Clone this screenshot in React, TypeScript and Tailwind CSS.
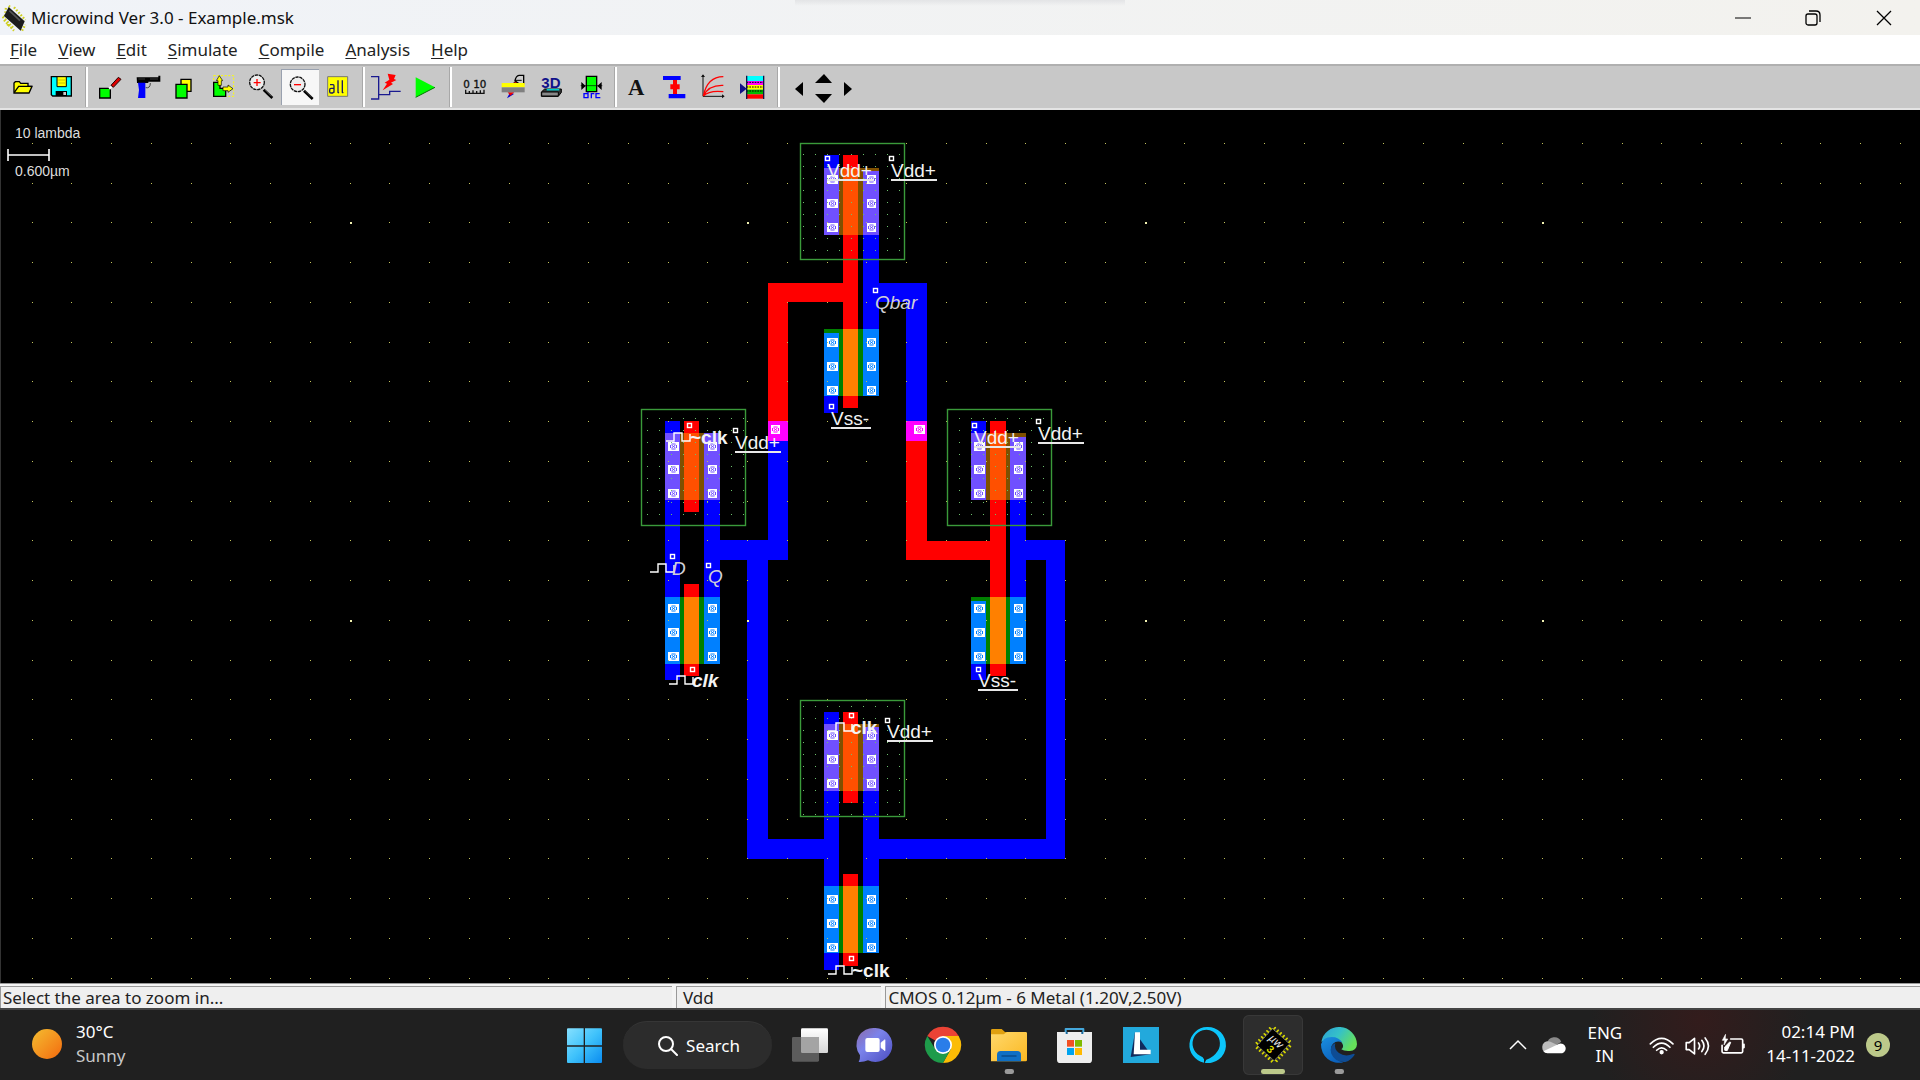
import React from "react";

type P = { children?: React.ReactNode };

/* ---------- toolbar ---------- */

function Tool({ label, box, wide, active, children }: P & { label: string; box: string; wide?: boolean; active?: boolean }) {
  return (
    <button
      aria-label={label}
      className={`h-9 shrink-0 ${wide ? "w-[39px]" : "w-[38px]"} ${active ? "border-t border-l border-gray-400 bg-[#f7f7f7]" : ""}`}
    >
      <svg viewBox={box} className={`h-9 ${wide ? "w-[39px]" : "w-[38px]"} ${active ? "-mt-px -ml-px" : ""}`}>
        {children}
      </svg>
    </button>
  );
}

function Sep() {
  return <div className="h-10 w-[3px] shrink-0 border-l border-[#a8a8a8] bg-white" />;
}

function Toolbar() {
  return (
    <div className="flex h-[46px] shrink-0 items-center border-t-2 border-b-2 border-t-[#b0b0b0] border-b-[#e4e4e4] bg-[#c8c8c8] pl-1" role="toolbar">
      <Tool label="Open" box="12 210 114 108">
        <path d="M42 282V252l4-4h12l4 5h22v9h12l-9 20z" fill="#ff0" stroke="#000" strokeWidth="4" />
        <path d="M43 280l13-18h40" fill="none" stroke="#000" strokeWidth="4" />
      </Tool>
      <Tool label="Save" box="126 210 114 108">
        <path d="M154 233h60v58h-56l-4-4z" fill="#0ff" stroke="#000" strokeWidth="4" />
        <path d="M171 233h28v30h-28z" fill="#ff0" stroke="#000" strokeWidth="3" />
        <path d="M175 243h20M175 252h20" stroke="#aa0" strokeWidth="2" />
        <path d="M167 276h34v15h-34z" fill="#000" />
        <path d="M190 279h8v9h-8z" fill="#ccc" />
      </Tool>
      <div className="w-[5px]" />
      <Sep />
      <div className="w-[3px]" />
      <Tool label="Draw box" box="273 210 114 108">
        <path d="M299 268h32v29h-32z" fill="#0f0" stroke="#000" strokeWidth="4" />
        <path d="M325 266l8-6 4 5-7 7z" fill="#fff" />
        <path d="M333 259l22-24 8 6-23 24z" fill="#e00000" stroke="#200" strokeWidth="3" />
      </Tool>
      <Tool label="Delete" box="387 210 114 108">
        <path d="M410 235h65v-5h6v18h-36v4h-34z" fill="#000" />
        <path d="M415 240h20M450 240h24" stroke="#555" strokeWidth="2" />
        <path d="M414 251h22v46h-22l3-24z" fill="#00f" />
        <path d="M437 266q14 3 14-14" stroke="#444" strokeWidth="3" fill="none" />
      </Tool>
      <Tool label="Copy" box="501 210 114 108">
        <path d="M543 241h30v36h-30z" fill="#ff0" stroke="#000" strokeWidth="4" />
        <path d="M528 256h33v41h-33z" fill="#0f0" stroke="#000" strokeWidth="4" />
      </Tool>
      <Tool label="Move" box="615 210 114 108">
        <path d="M641 230h60v62h-60z" fill="none" stroke="#ff0" strokeWidth="3" strokeDasharray="6 5" />
        <path d="M641 250h19v18h17v24h-36z" fill="#0f0" stroke="#000" strokeWidth="4" />
        <path d="M654 259v-14h-5l9-15 10 15h-4v14z" fill="#ff0" stroke="#000" strokeWidth="2" />
        <path d="M669 264h15v-6l15 11-15 11v-5h-15z" fill="#ff0" stroke="#000" strokeWidth="2" />
      </Tool>
      <Tool label="Zoom in" box="729 210 114 108">
        <path d="M791 272l26 25" stroke="#000" strokeWidth="8" />
        <path d="M794 272l20 20" stroke="#bbb" strokeWidth="1" />
        <circle cx="771" cy="250" r="22" fill="#eee" stroke="#111" strokeWidth="4" strokeDasharray="10 2" />
        <path d="M761 251h21M771 240v21" stroke="red" strokeWidth="4" />
      </Tool>
      <Tool label="Zoom out" box="843 210 114 108" active>
        <path d="M912 275l26 25" stroke="#000" strokeWidth="8" />
        <path d="M915 275l20 20" stroke="#bbb" strokeWidth="1" />
        <circle cx="893" cy="256" r="22" fill="#eee" stroke="#111" strokeWidth="4" strokeDasharray="10 2" />
        <path d="M882 257h21" stroke="red" strokeWidth="4" />
      </Tool>
      <Tool label="View all" box="957 210 114 108">
        <path d="M983 233h60v59h-60z" fill="#ff0" stroke="#777" strokeWidth="3" />
        <path d="M990 257h9q3 0 3 4v20M1002 268h-9q-4 0-4 5v5q0 4 4 4h5l4-4M1014 244v36l3 2M1027 244v36l3 2" fill="none" stroke="#1a1a60" strokeWidth="4" />
      </Tool>
      <div className="w-[5px]" />
      <Sep />
      <div className="w-px" />
      <Tool label="Simulate" box="1098 210 114 108">
        <path d="M1113 233h23v67h-23M1136 287h33v-10h33" fill="none" stroke="#1a1a90" strokeWidth="4" />
        <path d="M1163 224l24 4-5 12 7 3-16 8 6 4-31 19 13-20-7-3 14-9z" fill="red" />
      </Tool>
      <Tool label="Run" box="1212 210 114 108">
        <path d="M1247 235v60l58-30z" fill="#0f0" />
        <path d="M1247 295l58-30" stroke="#070" strokeWidth="3" />
      </Tool>
      <div className="w-[7px]" />
      <Sep />
      <div className="w-1" />
      <Tool label="Measure distance" box="48 30 117 108" wide>
        <text x="70" y="86" fontFamily="DejaVu Sans" fontSize="31" fill="#111" stroke="#111">0 10</text>
        <path d="M77 92v11h55V92M88 96v7M99 94v9M110 96v7M121 94v9" fill="none" stroke="#111" strokeWidth="4" />
      </Tool>
      <Tool label="2D cross section" box="162 30 117 108" wide>
        <path d="M198 118l7-14h15z" fill="#00c" />
        <path d="M200 100h20l-12 10z" fill="#e00" />
        <path d="M217 73l8-8 12 8z" fill="#e00" stroke="#000" strokeWidth="2" />
        <path d="M222 65q3-15 12-16h14v25h-14z" fill="#ccc" stroke="#000" strokeWidth="4" />
        <path d="M222 64h20" stroke="#000" strokeWidth="3" />
        <path d="M182 72h69v13h-69z" fill="#ff0" />
        <path d="M182 85h69v15h-69z" fill="#808080" />
      </Tool>
      <Tool label="3D process view" box="279 30 117 108" wide>
        <text x="301" y="88" fontFamily="Liberation Sans" fontWeight="bold" fontSize="45" fill="#11118a">3D</text>
        <path d="M301 99l10-9h50v10l-9 12h-51z" fill="#333" stroke="#000" strokeWidth="3" />
        <path d="M302 99h50v12h-50z" fill="#888" stroke="#000" strokeWidth="3" />
        <path d="M317 92h38" stroke="#0cc" strokeWidth="5" />
      </Tool>
      <Tool label="Design rule checker" box="402 30 117 108" wide>
        <path d="M442 52h31v46h-31z" fill="#0f0" stroke="#000" strokeWidth="4" />
        <path d="M427 69v24l13-12zM488 69v24l-13-12z" fill="#000" />
        <path d="M425 80h65" stroke="#000" strokeWidth="2" />
        <path d="M447 98v18h-12v-12h12M457 118v-14h9M482 104h-11v12h13" fill="none" stroke="#00f" strokeWidth="4" />
      </Tool>
      <div className="w-0.5" />
      <Sep />
      <Tool label="Add text" box="531 30 117 108" wide>
        <text x="564" y="109" fontFamily="Liberation Serif" fontWeight="bold" fontSize="68" fill="#111">A</text>
      </Tool>
      <Tool label="Add a via" box="648 30 117 108" wide>
        <path d="M669 51h53v12h-53zM686 105h50v13h-50z" fill="#00f" />
        <path d="M699 63h12v13h8v15h-8v14h-12V91h-8V76h8z" fill="red" />
      </Tool>
      <Tool label="MOS characteristics" box="765 30 117 108" wide>
        <path d="M789 48v64h62" fill="none" stroke="#111" strokeWidth="3" />
        <path d="M783 54l6-8 6 8zM846 106l8 6-8 6z" fill="#111" />
        <path d="M790 111q12-58 60-58M790 111q16-34 60-32M790 111q18-18 60-13" fill="none" stroke="red" strokeWidth="4" />
      </Tool>
      <Tool label="Layer palette" box="885 30 117 108" wide>
        <path d="M923 51h50v15h-50z" fill="#0ff" />
        <path d="M923 66h50v12h-50z" fill="#f0f" />
        <path d="M923 78h50v14h-50z" fill="#ff0" />
        <path d="M923 92h50v14h-50z" fill="#0b0" />
        <path d="M923 106h50v13h-50z" fill="red" />
        <path d="M923 70h50M923 84h50M923 96h50" stroke="#000" strokeWidth="3" strokeDasharray="5 3" />
        <path d="M923 50v70M974 50v70" stroke="#114" strokeWidth="4" />
        <path d="M903 73l20 16-20 16z" fill="#118" />
      </Tool>
      <div className="w-1" />
      <Sep />
      <div className="w-1.5" />
      <button aria-label="Scroll left" className="w-[25px]"><svg viewBox="0 0 25 36" className="h-9"><path d="M17 13v14l-8-7z" /></svg></button>
      <div className="flex h-9 w-[25px] flex-col">
        <button aria-label="Scroll up" className="h-[18px]"><svg viewBox="0 0 25 18" className="h-[18px]"><path d="M4 14h17l-8-9z" /></svg></button>
        <button aria-label="Scroll down" className="h-[18px]"><svg viewBox="0 0 25 18" className="h-[18px]"><path d="M4 7h17l-8 9z" /></svg></button>
      </div>
      <button aria-label="Scroll right" className="w-[25px]"><svg viewBox="0 0 25 36" className="h-9"><path d="M8 13v14l8-7z" /></svg></button>
    </div>
  );
}

/* ---------- layout drawing ---------- */

const BLUE = "#0000ff";
const RED = "#ff0000";

function Box({ x1, y1, x2, y2, c }: { x1: number; y1: number; x2: number; y2: number; c: string }) {
  return <rect x={x1} y={y1} width={x2 - x1} height={y2 - y1} fill={c} />;
}

function Contact({ x, y, w = 9, c }: { x: number; y: number; w?: number; c: string }) {
  const m = x + w / 2;
  return (
    <g>
      <rect x={x} y={y} width={w} height={9} fill="#fff" />
      <path d={`M${m - 2} ${y + 2}h4M${m - 2} ${y + 7}h4M${m - 3} ${y + 3}v3M${m + 3} ${y + 3}v3M${m - 2} ${y + 3}l4 3M${m + 2} ${y + 3}l-4 3`} stroke={c} strokeWidth={1} fill="none" />
    </g>
  );
}

function Mark({ x, y, c = "#000" }: { x: number; y: number; c?: string }) {
  return <rect x={x + 0.5} y={y + 0.5} width={4} height={4} fill={c} stroke="#fff" strokeWidth={1.4} />;
}

function Pulse({ x, y }: { x: number; y: number }) {
  return <path d={`M${x} ${y}h8v-8h8v8h8v-7`} fill="none" stroke="#fff" strokeWidth={1.4} />;
}

type Kind = "power" | "clock" | "clockItalic" | "node";
function Label({ x, y, kind, children }: P & { x: number; y: number; kind: Kind }) {
  const clock = kind === "clock" || kind === "clockItalic";
  return (
    <text
      x={x}
      y={y}
      fontSize={19}
      fontWeight={clock ? 700 : 400}
      fontStyle={kind === "node" || kind === "clockItalic" ? "italic" : "normal"}
      fill={kind === "node" ? "#d0d0d8" : "#f4f4f4"}
    >
      {children}
    </text>
  );
}

function Rule({ x, y, w = 46 }: { x: number; y: number; w?: number }) {
  return <rect x={x} y={y} width={w} height={2} fill="#e8e8e8" />;
}

function Well({ x, y, dx, dy, cols = 9, rows = 9 }: { x: number; y: number; dx: number; dy: number; cols?: number; rows?: number }) {
  return (
    <g>
      <rect x={x + 0.5} y={y + 0.5} width={104} height={116} fill="none" stroke="#3a9a3a" strokeWidth={1.4} />
      {Array.from({ length: cols * rows }, (_, i) => (
        <rect key={i} x={dx + (i % cols) * 12} y={dy + Math.floor(i / cols) * 12} width={1} height={1} fill="#6cc06c" />
      ))}
    </g>
  );
}

/* A transistor's diffusion: left metal, gate and right metal share one x origin. */
function Device({ x, y, p, gate = 15, lTop = 0, rTop = 0, rows }: { x: number; y: number; p: boolean; gate?: number; lTop?: number; rTop?: number; rows: number[] }) {
  const metal = p ? "#7050ff" : "#0080ff";
  return (
    <g>
      <Box x1={x} y1={y} x2={x + 55} y2={y + 67} c={p ? "#7f5000" : "#008000"} />
      <Box x1={x} y1={y + lTop} x2={x + 15} y2={y + 67} c={metal} />
      <Box x1={x + 39} y1={y + rTop} x2={x + 55} y2={y + 67} c={metal} />
      <Box x1={x + 19} y1={y} x2={x + 19 + gate} y2={y + 67} c={p ? "#ff5000" : "#ff8000"} />
      {rows.map((r) => (
        <g key={r}>
          <Contact x={x + 3} y={r} w={11} c={metal} />
          <Contact x={x + 43} y={r} c={metal} />
        </g>
      ))}
    </g>
  );
}

function GridDots() {
  const dots: React.ReactNode[] = [];
  for (let r = 0; r < 22; r++)
    for (let c = 0; c < 96; c++) {
      const major = c % 10 === 8 && r % 10 === 2;
      dots.push(
        <rect
          key={`${r}-${c}`}
          x={Math.round(31.6 + c * 39.75)}
          y={Math.round(142.9 + r * 39.75)}
          width={major ? 2 : 1}
          height={major ? 2 : 1}
          fill={major ? "#f0f0b0" : "#c4c45c"}
        />,
      );
    }
  return <g>{dots}</g>;
}

function Layout() {
  return (
    <svg className="block h-full w-full font-['Liberation_Sans',sans-serif]" role="img" aria-label="Latch layout">
      <g transform="translate(-1 -110)">
        {/* metal */}
        <Box x1={824} y1={155} x2={839} y2={168} c={BLUE} />
        <Box x1={863} y1={234} x2={879} y2={330} c={BLUE} />
        <Box x1={879} y1={283} x2={927} y2={302} c={BLUE} />
        <Box x1={906} y1={283} x2={927} y2={421} c={BLUE} />
        <Box x1={824} y1={396} x2={838} y2={413} c={BLUE} />
        <Box x1={665} y1={421} x2={680} y2={680} c={BLUE} />
        <Box x1={704} y1={500} x2={720} y2={597} c={BLUE} />
        <Box x1={720} y1={540} x2={788} y2={560} c={BLUE} />
        <Box x1={768} y1={441} x2={788} y2={560} c={BLUE} />
        <Box x1={747} y1={560} x2={768} y2={859} c={BLUE} />
        <Box x1={747} y1={839} x2={824} y2={859} c={BLUE} />
        <Box x1={971} y1={421} x2={986} y2={433} c={BLUE} />
        <Box x1={1010} y1={500} x2={1026} y2={597} c={BLUE} />
        <Box x1={1026} y1={540} x2={1065} y2={560} c={BLUE} />
        <Box x1={1046} y1={540} x2={1065} y2={859} c={BLUE} />
        <Box x1={879} y1={839} x2={1065} y2={859} c={BLUE} />
        <Box x1={971} y1={663} x2={986} y2={680} c={BLUE} />
        <Box x1={824} y1={712} x2={839} y2={970} c={BLUE} />
        <Box x1={863} y1={791} x2={879} y2={886} c={BLUE} />
        {/* polysilicon */}
        <Box x1={843} y1={155} x2={858} y2={408} c={RED} />
        <Box x1={768} y1={283} x2={843} y2={302} c={RED} />
        <Box x1={768} y1={283} x2={788} y2={421} c={RED} />
        <Box x1={684} y1={421} x2={699} y2={512} c={RED} />
        <Box x1={684} y1={584} x2={699} y2={676} c={RED} />
        <Box x1={990} y1={421} x2={1006} y2={676} c={RED} />
        <Box x1={906} y1={441} x2={927} y2={560} c={RED} />
        <Box x1={906} y1={541} x2={990} y2={560} c={RED} />
        <Box x1={843} y1={712} x2={858} y2={803} c={RED} />
        <Box x1={843} y1={874} x2={858} y2={966} c={RED} />
        {/* vias between poly and metal */}
        <Box x1={768} y1={421} x2={788} y2={441} c="#ff00ff" />
        <Box x1={906} y1={421} x2={927} y2={441} c="#ff00ff" />
        <Contact x={771} y={425} c="#ff00ff" />
        <Contact x={914} y={425} w={11} c="#ff00ff" />
        {/* transistors */}
        <Device x={824} y={168} p rTop={3} rows={[175, 199, 223]} />
        <Device x={824} y={329} p={false} lTop={4} rows={[338, 362, 386]} />
        <Device x={665} y={433} p rows={[442, 465, 489]} />
        <Device x={665} y={597} p={false} rows={[604, 628, 652]} />
        <Device x={971} y={433} p rTop={4} gate={16} rows={[442, 465, 489]} />
        <Device x={971} y={597} p={false} lTop={4} gate={16} rows={[604, 628, 652]} />
        <Device x={824} y={724} p rTop={3} rows={[731, 755, 779]} />
        <Device x={824} y={886} p={false} rows={[895, 919, 943]} />
        <GridDots />
        <Well x={800} y={143} dx={803} dy={154} />
        <Well x={641} y={409} dx={647} dy={418} />
        <Well x={947} y={409} dx={959} dy={418} cols={8} />
        <Well x={800} y={700} dx={803} dy={706} rows={10} />
        {/* labels */}
        <Mark x={825} y={156} c={BLUE} />
        <Label x={827} y={177} kind="power">Vdd+</Label>
        <Rule x={827} y={179} />
        <Mark x={889} y={156} />
        <Label x={891} y={177} kind="power">Vdd+</Label>
        <Rule x={891} y={179} />
        <Mark x={873} y={288} c={BLUE} />
        <Label x={875} y={309} kind="node">Qbar</Label>
        <Mark x={829} y={404} c={BLUE} />
        <Label x={831} y={425} kind="power">Vss-</Label>
        <Rule x={831} y={427} w={40} />

        <Mark x={687} y={423} c={RED} />
        <Pulse x={666} y={441} />
        <Label x={690} y={444} kind="clock">~clk</Label>
        <Mark x={733} y={428} />
        <Label x={735} y={449} kind="power">Vdd+</Label>
        <Rule x={735} y={451} />
        <Mark x={670} y={554} c={BLUE} />
        <Pulse x={650} y={572} />
        <Label x={672} y={575} kind="node">D</Label>
        <Mark x={706} y={563} c={BLUE} />
        <Label x={708} y={583} kind="node">Q</Label>
        <Mark x={690} y={667} c={RED} />
        <Pulse x={669} y={684} />
        <Label x={692} y={687} kind="clockItalic">clk</Label>

        <Mark x={972} y={423} c={BLUE} />
        <Label x={974} y={444} kind="power">Vdd+</Label>
        <Rule x={974} y={446} />
        <Mark x={1036} y={419} />
        <Label x={1038} y={440} kind="power">Vdd+</Label>
        <Rule x={1038} y={442} />
        <Mark x={976} y={667} c={BLUE} />
        <Label x={978} y={687} kind="power">Vss-</Label>
        <Rule x={978} y={689} w={40} />

        <Mark x={849} y={713} c={RED} />
        <Pulse x={828} y={731} />
        <Label x={851} y={734} kind="clock">clk</Label>
        <Mark x={885} y={718} />
        <Label x={887} y={738} kind="power">Vdd+</Label>
        <Rule x={887} y={740} />
        <Mark x={849} y={956} c={RED} />
        <Pulse x={828} y={974} />
        <Label x={852} y={977} kind="clock">~clk</Label>

        {/* scale bar */}
        <text x={15} y={138} fontSize={14} fill="#ddd">10 lambda</text>
        <path d="M8 155h41M8 149v12M49 149v12" stroke="#fff" strokeWidth={1.6} fill="none" />
        <text x={15} y={176} fontSize={14} fill="#ddd">0.600µm</text>
      </g>
    </svg>
  );
}

/* ---------- taskbar ---------- */

function App60({ label, box, active, children }: P & { label: string; box: string; active?: boolean }) {
  return (
    <button aria-label={label} className={`h-[60px] w-[60px] shrink-0 rounded-md ${active ? "bg-[#2d2d2d] ring-1 ring-[#383838] ring-inset" : ""}`}>
      <svg viewBox={box} className="h-[60px] w-[60px]">{children}</svg>
    </button>
  );
}

function Chip() {
  const pins = [-30, -18, -6, 6, 18, 30];
  return (
    <g transform="translate(817 191) rotate(42)">
      {pins.map((k) => (
        <path key={k} d={`M${k} -36v-6M${k} 36v6M-36 ${k}h-6M36 ${k}h6`} strokeLinecap="round" stroke="#d8d800" strokeWidth="5" />
      ))}
      <rect x="-34" y="-34" width="68" height="68" fill="#000" stroke="#ccc" strokeWidth="2" strokeDasharray="3 3" />
      <text x="-23" y="-2" fontFamily="Liberation Sans" fontStyle="italic" fontSize="34" fill="#eee">µw</text>
      <text x="-6" y="27" fontFamily="Liberation Sans" fontWeight="bold" fontSize="32" fill="#dd0">3</text>
    </g>
  );
}

function Taskbar() {
  return (
    <footer className="grid h-[72px] shrink-0 grid-cols-[1fr_auto_1fr] items-center border-t-2 border-[#444] bg-[#202020] bg-[radial-gradient(circle_at_1700px_10px,#331c1c,#202020_110px)] text-[17px] text-white">
      <button className="flex h-[60px] items-center gap-[14px] justify-self-start pb-0.5 pl-8 text-left">
        <span className="size-[30px] rounded-full bg-linear-135 from-[#f2bc30] to-[#f2680c]" />
        <span className="leading-6">
          <span className="block">30°C</span>
          <span className="block text-[#c8c8c8]">Sunny</span>
        </span>
      </button>
      <div className="flex items-center gap-1.5 pl-0.5">
        <App60 label="Start" box="42 102 180 180">
          <defs>
            <linearGradient id="win" gradientUnits="userSpaceOnUse" x1="81" y1="142" x2="186" y2="246">
              <stop offset="0" stopColor="#86e0ff" /><stop offset="0.5" stopColor="#3fc2fb" /><stop offset="1" stopColor="#0a8cf0" />
            </linearGradient>
          </defs>
          <path d="M81 145q0-3 3-3h47v51H81zM135 142h48q3 0 3 3v48h-51zM81 197h50v49H84q-3 0-3-3zM135 197h51v46q0 3-3 3h-48z" fill="url(#win)" />
        </App60>
        <button className="mx-[3px] flex h-12 w-[149px] items-center justify-center gap-2 rounded-full border-t border-[#363636] bg-[#2c2c2c] pl-1">
          <svg viewBox="0 0 20 20" className="size-5" fill="none" stroke="#fff" strokeWidth="2" strokeLinecap="round"><circle cx="8" cy="8" r="7" /><path d="M13 13l6 6" /></svg>
          Search
        </button>
        <App60 label="Task view" box="723 102 180 180">
          <defs><linearGradient id="tv" x1="0" y1="0" x2="0" y2="1"><stop offset="0" stopColor="#fff" /><stop offset="1" stopColor="#d6d6d6" /></linearGradient></defs>
          <rect x="783" y="142" width="81" height="74" rx="4" fill="url(#tv)" />
          <rect x="756" y="168" width="81" height="74" rx="4" fill="#5c5c5c" />
          <path d="M783 168h54v48h-50q-4 0-4-4z" fill="#a4a4a4" />
        </App60>
        <App60 label="Chat" box="921 102 180 180">
          <defs><linearGradient id="chat" x1="0" y1="0" x2="1" y2="1"><stop offset="0" stopColor="#8c6aa8" /><stop offset="0.4" stopColor="#7b83eb" /><stop offset="1" stopColor="#4a4cc0" /></linearGradient></defs>
          <path d="M1006 141a51 51 0 1 1-22 97q-14 6-28 5 5-10 4-20a51 51 0 0 1 46-82z" fill="url(#chat)" />
          <rect x="976" y="171" width="43" height="42" rx="6" fill="#fff" />
          <path d="M1023 185l12-9v33l-12-9z" fill="#fff" stroke="#fff" strokeWidth="2" strokeLinejoin="round" />
        </App60>
        <App60 label="Chrome" box="1116 102 180 180">
          <path d="M1206 192L1159 165A54 54 0 0 1 1253 165z" fill="#ea4335" />
          <path d="M1206 165H1253A54 54 0 0 1 1206 246L1229 205z" fill="#fbbc05" />
          <path d="M1159 165L1183 205L1229 205L1206 246A54 54 0 0 1 1159 165z" fill="#1e9b4a" />
          <circle cx="1206" cy="192" r="27" fill="#fff" />
          <circle cx="1206" cy="192" r="22" fill="#2a7de9" />
        </App60>
        <App60 label="File Explorer" box="1314 102 180 180">
          <defs><linearGradient id="fold" x1="0" y1="0" x2="1" y2="1"><stop offset="0" stopColor="#ffd86b" /><stop offset="1" stopColor="#fbb822" /></linearGradient></defs>
          <path d="M1350 148q0-4 4-4h28l10 9h20v20h-62z" fill="#e0a010" />
          <path d="M1350 160h38l10-7h56q4 0 4 4v80q0 4-4 4h-104z" fill="url(#fold)" />
          <path d="M1368 241v-20q0-11 11-11h50q11 0 11 11v20z" fill="#0f6fc4" />
          <path d="M1383 225h42" stroke="#084c8c" strokeWidth="4" strokeLinecap="round" />
          <rect x="1391" y="264" width="28" height="15" rx="7" fill="#9a9a9a" />
        </App60>
        <App60 label="Microsoft Store" box="132 102 180 180">
          <path d="M194 160v-16h53v16" fill="none" stroke="#45a8dc" strokeWidth="6" strokeLinejoin="round" />
          <path d="M168 153h105v83q0 10-10 10h-85q-10 0-10-10z" fill="#eee" />
          <path d="M197 153v6M244 153v6" stroke="#176ba0" strokeWidth="6" />
          <path d="M198 177h21v20h-21z" fill="#f25022" /><path d="M222 177h21v20h-21z" fill="#7fba00" />
          <path d="M198 201h21v21h-21z" fill="#00a4ef" /><path d="M222 201h21v21h-21z" fill="#ffb900" />
        </App60>
        <App60 label="Lenovo Vantage" box="330 102 180 180">
          <path d="M366 138h108v108H366z" fill="#22a9dc" />
          <path d="M402 154l-13 74 60-8z" fill="#102a5c" />
          <path d="M402 154h15v52h32v14h-51z" fill="#fff" />
        </App60>
        <App60 label="Alexa" box="528 102 180 180">
          <path d="M618 138a54 54 0 0 0-9 107v-10q-2-7-12-11a41 41 0 1 1 53-14q-12 19-34 26l-5 9a54 54 0 1 0 7-107z" fill="#0cc5fa" />
        </App60>
        <App60 label="Microwind" box="726 102 180 180" active>
          <Chip />
          <rect x="780" y="264" width="72" height="15" rx="7" fill="#bcc98a" />
        </App60>
        <App60 label="Microsoft Edge" box="924 102 180 180">
          <defs>
            <linearGradient id="eg" x1="0" y1="0" x2="1" y2="0.5"><stop offset="0" stopColor="#2b9fd8" /><stop offset="0.5" stopColor="#35c1c8" /><stop offset="1" stopColor="#66e05a" /></linearGradient>
            <linearGradient id="eb" x1="0" y1="0" x2="0.5" y2="1"><stop offset="0" stopColor="#1a8fe0" /><stop offset="1" stopColor="#0c62bd" /></linearGradient>
          </defs>
          <path d="M961 182a54 54 0 0 1 107 8q-1 19-22 20-18 1-25-5 8-6 4-15-5-15-26-15-22 0-38 7z" fill="url(#eg)" />
          <path d="M960 190q6-22 32-22 22 0 32 17-16-8-28 3-10 12-3 28 12 24 34 28a54 54 0 0 1-67-54z" fill="url(#eb)" />
          <path d="M1003 186q-20 10-12 32 12 27 42 25 18-6 28-22 0-4-5-2-24 10-42-3-16-12-11-30z" fill="#0e4c94" />
          <rect x="1001" y="264" width="28" height="15" rx="7" fill="#9a9a9a" />
        </App60>
      </div>
      <div className="flex items-center justify-self-end pr-[30px]">
        <button aria-label="Show hidden icons" className="mr-[15px]"><svg viewBox="0 0 18 12" className="w-[18px]" fill="none" stroke="#fff" strokeWidth="1.5"><path d="M1 10l8-8 8 8" /></svg></button>
        <button aria-label="OneDrive" className="mr-[21px]">
          <svg viewBox="185 165 74 52" className="w-[25px]">
            <path d="M200 188a22 22 0 0 1 42-6l-20 14z" fill="#8a8a8a" />
            <path d="M186 200a17 17 0 0 1 24-18l30 14-44 18a14 14 0 0 1-10-14z" fill="#bdbdbd" />
            <path d="M236 188a14 14 0 0 1 9 28h-44q-8 0-12-6z" fill="#fff" />
          </svg>
        </button>
        <button className="mr-[27px] pb-0.5 text-center leading-[23px]">ENG<br />IN</button>
        <button aria-label="Network, volume and battery" className="mr-5 flex">
          <svg viewBox="508 153 292 72" className="w-[97px]" fill="none" stroke="#fff" strokeWidth="5" strokeLinecap="round" strokeLinejoin="round">
            <path d="M512 186q34-34 68 0M521 196q25-25 50 0M531 205q15-14 30 0" />
            <circle cx="546" cy="211" r="4" fill="#fff" />
            <path d="M620 182h9l16-13v47l-16-13h-9zM657 183q7 9 0 18M667 175q13 17 0 34M677 168q20 24 0 49" />
            <path d="M754 171h32q4 0 4 4v34q0 4-4 4h-54q-4 0-4-4v-19M794 187v10" />
            <path d="M738 158l-9 17h7l-2 14 11-18h-7z" fill="#fff" strokeWidth="2" />
            <path d="M736 204v-9l14-14h4l-10 24z" fill="#fff" strokeWidth="3" />
          </svg>
        </button>
        <button className="mr-[11px] pb-0.5 text-right leading-6">02:14 PM<br />14-11-2022</button>
        <button aria-label="9 notifications" className="size-6 rounded-full bg-[#bcc98a] text-[15px] leading-6 text-black">9</button>
      </div>
    </footer>
  );
}

/* ---------- window ---------- */

const menus = ["File", "View", "Edit", "Simulate", "Compile", "Analysis", "Help"];

export default function App() {
  return (
    <div className="flex h-screen flex-col overflow-hidden bg-[#f0f0f0] font-['Noto_Sans',sans-serif]">
      <header className="relative flex h-[35px] shrink-0 items-center bg-linear-to-r from-[#f0f3f8] to-[#f3f2ee]">
        <div className="absolute top-0 left-1/2 h-1.5 w-[330px] -translate-x-1/2 bg-linear-to-b from-[#e3e4e6] to-transparent" />
        <svg viewBox="0 0 84 96" className="h-8 w-7">
          <path d="M18 18l-4 30M26 12l8 4M8 44l34 36M12 54l30 32M66 86l10-18M42 16l34 38M24 66v8M34 74v8" stroke="#cfcf20" strokeWidth="7" strokeDasharray="5 5" />
          <path d="M26 15l48 43-12 28-50-44z" fill="#1c1c1c" />
          <path d="M28 26l32 30" stroke="#555" strokeWidth="5" />
        </svg>
        <h1 className="ml-[3px] flex-1 text-[17px] text-[#111]">Microwind Ver 3.0 - Example.msk</h1>
        <div className="flex h-full">
          <button aria-label="Minimize" className="flex w-[70px] items-center justify-center"><svg viewBox="0 0 16 16" className="size-4"><path d="M0 8h16" stroke="#000" /></svg></button>
          <button aria-label="Restore" className="flex w-[70px] items-center justify-center"><svg viewBox="0 0 16 16" className="size-4" fill="none" stroke="#000" strokeWidth="1.3"><rect x="1" y="4" width="11" height="11" rx="2" /><path d="M4 1h7q4 0 4 4v7" /></svg></button>
          <button aria-label="Close" className="flex w-[72px] items-center justify-center"><svg viewBox="0 0 16 16" className="size-4"><path d="M1 1l14 14M15 1L1 15" stroke="#000" strokeWidth="1.3" /></svg></button>
        </div>
      </header>
      <nav className="flex h-[29px] shrink-0 items-center gap-px bg-white text-[17px] text-[#222]">
        {menus.map((m) => (
          <button key={m} className="px-[10px]"><span className="underline underline-offset-2">{m[0]}</span>{m.slice(1)}</button>
        ))}
      </nav>
      <Toolbar />
      <main className="min-h-0 flex-1 border-l border-[#333] bg-black">
        <Layout />
      </main>
      <div className="flex h-[25px] shrink-0 gap-1 border-t border-[#999] bg-[#f4f4f4] pt-0.5 text-[17px] leading-[21px] text-[#222]">
        <div className="w-[35%] border-t border-l border-[#999] bg-[#efefef] pl-0.5">Select the area to zoom in...</div>
        <div className="w-[10.7%] border-t border-l border-[#999] bg-[#efefef] pl-1.5">Vdd</div>
        <div className="flex-1 border-t border-l border-[#999] bg-[#efefef] pl-0.5">CMOS 0.12µm - 6 Metal (1.20V,2.50V)</div>
      </div>
      <Taskbar />
    </div>
  );
}
